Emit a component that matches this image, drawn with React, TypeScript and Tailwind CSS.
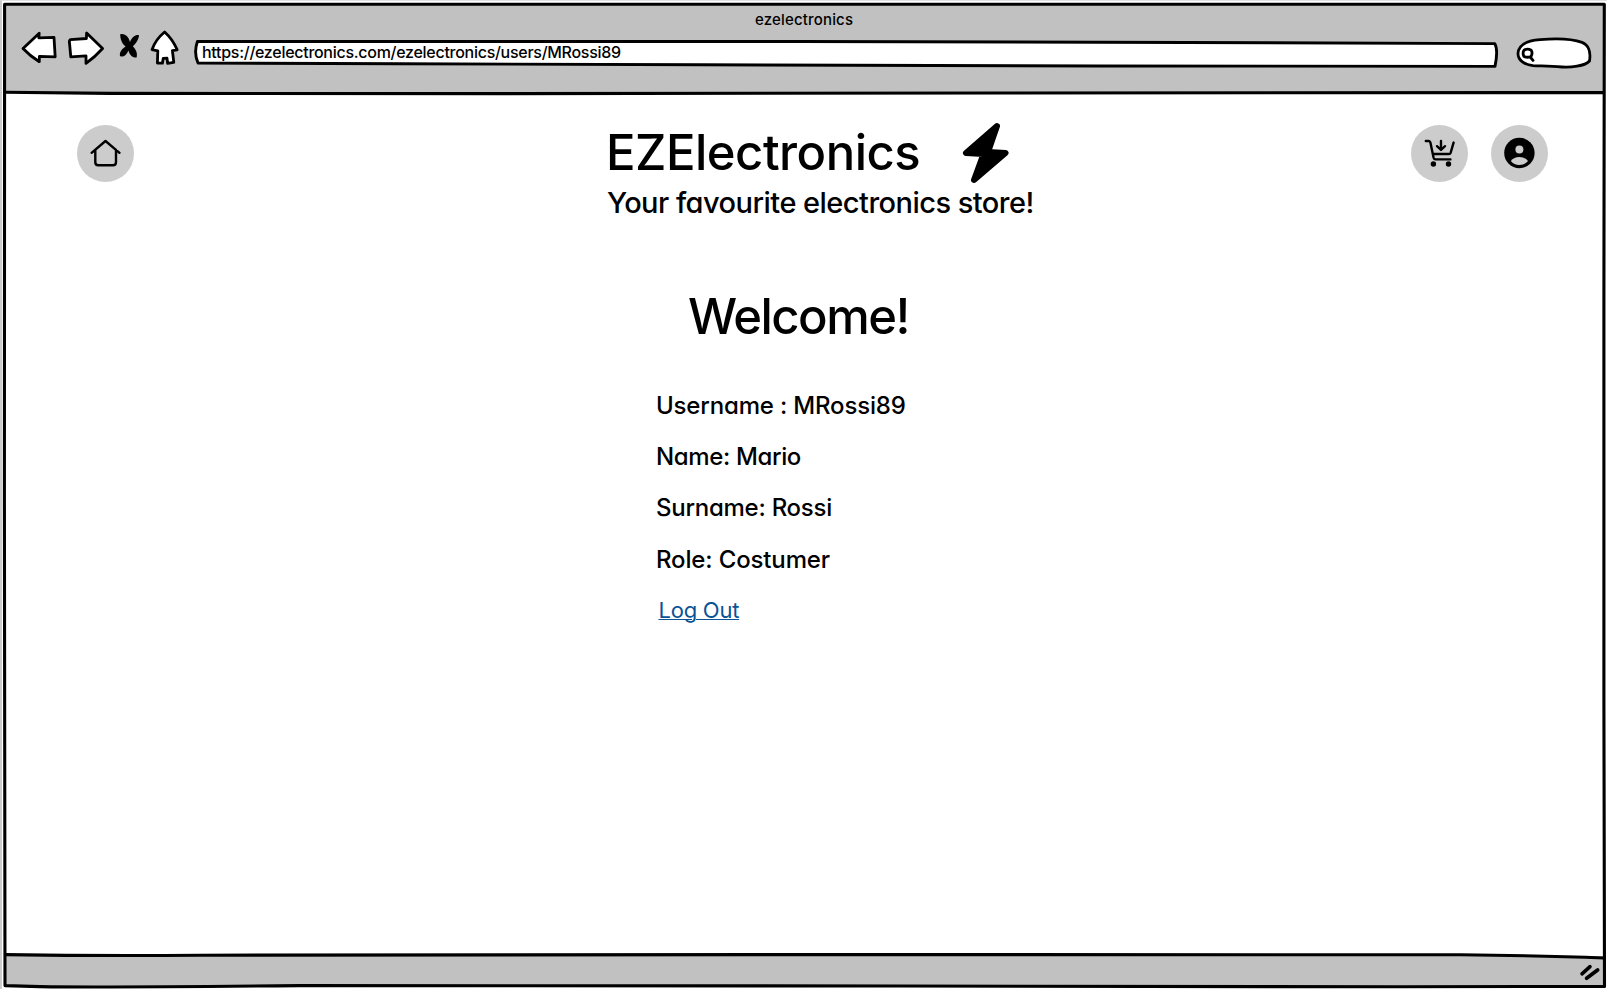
import type { ReactNode } from "react";

function WindowFrame() {
  return (
    <svg
      className="pointer-events-none absolute -top-px -left-[2px]"
      width="1607"
      height="989"
      viewBox="0 0 1607 989"
      fill="none"
      stroke="#000"
      strokeWidth="3.1"
      strokeLinejoin="round"
    >
      <path d="M4.6 4.2H1604.3L1603.9 300V700L1604.5 986.4L1400 986.8L900 986L300 985.6Q100 987.6 40 986.6L5 985.6L4.4 500Z" />
      <path d="M5 92.2L110 93.4L500 93.6L1000 93L1604 92.6" />
      <path d="M5 954.6Q100 956 200 955.2L800 954.6L1460 954.8Q1540 955.6 1604 958" />
    </svg>
  );
}

function NavIcons() {
  return (
    <svg className="mt-[28px] ml-[16px] shrink-0" width="160" height="40" viewBox="20 28 160 40" stroke="#000" strokeWidth="2.8" strokeLinejoin="round" fill="#fff">
      <path d="M23 48.5L39.2 33.2L38.8 37.8L54 37.4L55.2 56.8L39.4 56.4L39.3 61.7Q30 56 23 48.5Z" />
      <path d="M102.6 48.5L86.6 33L86.4 38.5L70.4 39.6Q68.8 40.8 69.6 44L70.8 56.8L86 55.8L86 63.4Q95 57 102.6 48.5Z" />
      <path stroke="none" fill="#000" d="M120.3 34.2C125 33.5 128.5 36.5 130 42C132 37 135.5 34.6 139 35.2C138.8 39.2 136 43.6 132.8 46.3C136 49.5 137.8 53.5 136.6 57.4C132.5 57.8 129.4 54.8 128.5 50.4C126.5 55 123 57.8 120 56C119.3 52 121.8 48.8 125.6 46.4C121.8 43.4 120 38.5 120.3 34.2Z" />
      <path d="M164.6 32Q172.5 39 177.2 49.8L172.4 50.6L173.8 62.4L167.6 63.4L167 58.2L163.2 58.4L162.4 63.2L157.4 63L157.8 50.8L152 49.6Q155.5 39.5 164.6 32Z" />
    </svg>
  );
}

function AddressBar() {
  return (
    <div className="relative mt-[38px] ml-[14px] h-[31px] w-[1306px] shrink-0">
      <svg className="absolute inset-0" width="1306" height="31" viewBox="194 38 1306 31" fill="#fff" stroke="#000" strokeWidth="2.9" strokeLinejoin="round">
        <path d="M197.4 41.5L800 41.5L1100 42.2L1494.8 43.6Q1498.4 50 1495 66.4L1100 66L700 64.8L400 63.8L198 63Q193.5 53 197.4 41.5Z" />
      </svg>
      <span className="relative block pt-[4px] pl-[8px] text-[16px] leading-[20px] tracking-[-0.28px] whitespace-nowrap">
        https://ezelectronics.com/ezelectronics/users/MRossi89
      </span>
    </div>
  );
}

function SearchField() {
  return (
    <svg className="mt-[34px] ml-[14px] shrink-0" width="80" height="38" viewBox="1514 34 80 38" fill="#fff" stroke="#000" strokeWidth="2.8" strokeLinecap="round">
      <path d="M1518 53.5C1518.5 45 1527 40.6 1540 39.7C1557 38.2 1573 39.2 1582 42.4C1588.5 44.8 1591 52 1589.5 61C1585 66.4 1570 67.5 1562 67C1549 66 1540 66 1533 65.6C1524 64.8 1518 60 1518 53.5Z" />
      <path strokeWidth="2.8" d="M1524 50.2Q1527.5 48 1531.2 50.2Q1533 53 1531 56.5Q1527.5 58 1524 56.5Q1522.2 53 1524 50.2ZM1530.2 57L1533 60.4" />
    </svg>
  );
}

function RoundButton({ label, children }: { label: string; children: ReactNode }) {
  return (
    <button aria-label={label} className="size-[57px] shrink-0 rounded-full bg-[#ccc]">
      <svg width="57" height="57" viewBox="0 0 57 57" fill="none" stroke="#000" strokeWidth="2.4" strokeLinecap="round" strokeLinejoin="round">
        {children}
      </svg>
    </button>
  );
}

const details = [
  { text: "Username : MRossi89", tracking: "tracking-[-0.17px]" },
  { text: "Name: Mario", tracking: "tracking-[-0.36px]" },
  { text: "Surname: Rossi", tracking: "tracking-[-0.25px]" },
  { text: "Role: Costumer", tracking: "tracking-[-0.14px]" },
];

export default function App() {
  return (
    <div className="relative flex h-[989px] w-[1607px] flex-col overflow-hidden border-t border-l-2 border-t-[#dfdfe3] border-l-[#ccc] bg-white font-['Inter',sans-serif] font-medium text-black [font-feature-settings:'cv11']">
      <header className="mt-[3px] ml-[2px] flex h-[89px] w-[1600px] shrink-0 flex-col bg-[#c1c1c1]">
        <div className="-mt-1 flex h-[92px] items-start">
          <NavIcons />
          <AddressBar />
          <SearchField />
        </div>
      </header>
      <p className="absolute top-[9px] left-[753px] text-[15px] leading-[20px] tracking-[0.17px]">ezelectronics</p>

      <main className="flex grow flex-col">
        <div className="flex items-start pt-[32px] pr-[59px] pl-[75px]">
          <RoundButton label="Home">
            <path d="M14.6 27.8L28.5 16L42.5 27.8M18.3 25V37.2Q18.3 40.2 21.3 40.2H36Q39 40.2 39 37.2V25" />
          </RoundButton>
          <div className="ml-[472px] w-[440px]">
            <div className="-mt-[4px] flex items-start">
              <h1 className="w-[356px] text-[49px] leading-[64px] font-medium tracking-[-0.5px] whitespace-nowrap">EZElectronics</h1>
              <svg width="48" height="64" viewBox="962 121 48 64">
                <path d="M997 126L966 153L983.5 154L974 180L1005.5 153L988 152Z" fill="#000" stroke="#000" strokeWidth="6" strokeLinejoin="round" />
              </svg>
            </div>
            <p className="ml-[1px] text-[29px] leading-[36px] tracking-[-0.53px] whitespace-nowrap">Your favourite electronics store!</p>
          </div>
          <div className="ml-auto flex gap-[23px]">
            <RoundButton label="Cart">
              <path d="M14.8 16H17.6Q19 16 19.4 17.6L22.6 32.8Q23 34.4 24.6 34.4H39.4M21.8 29H38Q39.2 29 39.6 27.8L42.6 17.6M30 16V24M26 21.2L30 25L34 21.2" />
              <circle cx="22.4" cy="39" r="2.7" fill="#000" stroke="none" />
              <circle cx="37.5" cy="39" r="2.7" fill="#000" stroke="none" />
            </RoundButton>
            <RoundButton label="Account">
              <g stroke="none">
                <circle cx="28.4" cy="28" r="15.2" fill="#000" />
                <circle cx="28.4" cy="24.6" r="4" fill="#ccc" />
                <path d="M19.8 36Q23 31.9 28.4 31.9Q33.8 31.9 37 36Q33.8 40 28.4 40Q23 40 19.8 36Z" fill="#ccc" />
              </g>
            </RoundButton>
          </div>
        </div>

        <section className="ml-[654px]">
          <h2 className="mt-[66px] ml-[32px] text-[49px] leading-[60px] font-medium tracking-[-1.5px]">Welcome!</h2>
          <ul className="mt-[33px] text-[24px]">
            {details.map(({ text, tracking }) => (
              <li key={text} className={`h-[51.2px] leading-[51px] whitespace-nowrap ${tracking}`}>{text}</li>
            ))}
          </ul>
          <a href="#logout" className="ml-[2.5px] block w-fit text-[22px] leading-[50px] font-normal tracking-[-0.25px] text-[#0b5394] underline decoration-1 underline-offset-1">
            Log Out
          </a>
        </section>
      </main>

      <footer className="ml-[2px] flex h-[31px] w-[1600px] shrink-0 items-start justify-end bg-[#c1c1c1] pr-[3px]">
        <svg className="mt-[7px]" width="22" height="20" viewBox="1579 964 22 20" stroke="#000" strokeLinecap="round">
          <path d="M1582 974.8L1590 967.6" strokeWidth="3.6" />
          <path d="M1586.6 979.2L1597.6 971" strokeWidth="3.8" />
        </svg>
      </footer>
      <div className="h-[2px] shrink-0 bg-white" />
      <WindowFrame />
    </div>
  );
}
